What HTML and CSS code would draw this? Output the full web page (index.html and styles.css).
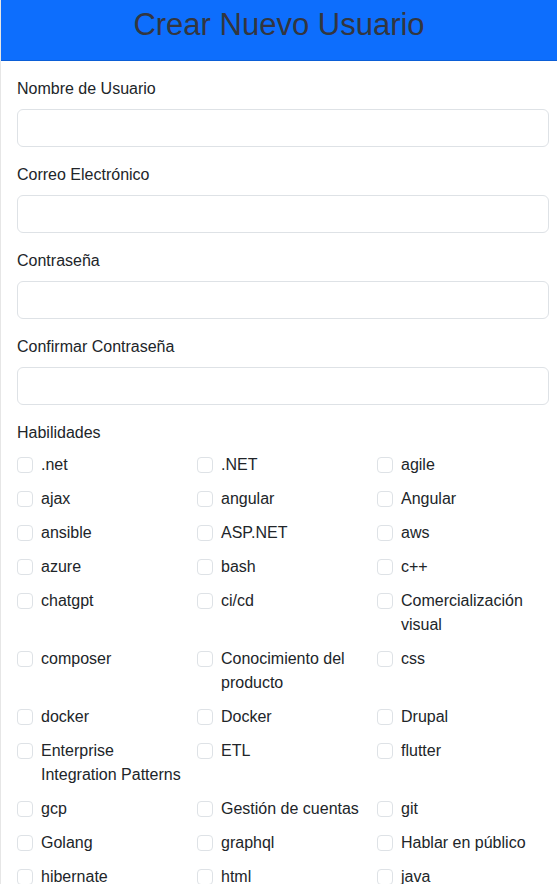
FILE: index.html
```html
<!DOCTYPE html>
<html lang="es">
<head>
<meta charset="utf-8">
<title>Crear Nuevo Usuario</title>
<link rel="stylesheet" href="styles.css">
</head>
<body>
<div class="card">
  <div class="card-header">
    <h1 class="title">Crear Nuevo Usuario</h1>
  </div>
  <form class="card-body">
    <div class="field">
      <label class="form-label" for="username">Nombre de Usuario</label>
      <input class="form-control" id="username" type="text">
    </div>
    <div class="field">
      <label class="form-label" for="email">Correo Electrónico</label>
      <input class="form-control" id="email" type="email">
    </div>
    <div class="field">
      <label class="form-label" for="password">Contraseña</label>
      <input class="form-control" id="password" type="password">
    </div>
    <div class="field">
      <label class="form-label" for="password2">Confirmar Contraseña</label>
      <input class="form-control" id="password2" type="password">
    </div>
    <div class="field">
      <div class="form-label">Habilidades</div>
      <div class="skills">
        <label class="check"><input type="checkbox"><span>.net</span></label>
        <label class="check"><input type="checkbox"><span>.NET</span></label>
        <label class="check"><input type="checkbox"><span>agile</span></label>
        <label class="check"><input type="checkbox"><span>ajax</span></label>
        <label class="check"><input type="checkbox"><span>angular</span></label>
        <label class="check"><input type="checkbox"><span>Angular</span></label>
        <label class="check"><input type="checkbox"><span>ansible</span></label>
        <label class="check"><input type="checkbox"><span>ASP.NET</span></label>
        <label class="check"><input type="checkbox"><span>aws</span></label>
        <label class="check"><input type="checkbox"><span>azure</span></label>
        <label class="check"><input type="checkbox"><span>bash</span></label>
        <label class="check"><input type="checkbox"><span>c++</span></label>
        <label class="check"><input type="checkbox"><span>chatgpt</span></label>
        <label class="check"><input type="checkbox"><span>ci/cd</span></label>
        <label class="check"><input type="checkbox"><span>Comercialización visual</span></label>
        <label class="check"><input type="checkbox"><span>composer</span></label>
        <label class="check"><input type="checkbox"><span>Conocimiento del producto</span></label>
        <label class="check"><input type="checkbox"><span>css</span></label>
        <label class="check"><input type="checkbox"><span>docker</span></label>
        <label class="check"><input type="checkbox"><span>Docker</span></label>
        <label class="check"><input type="checkbox"><span>Drupal</span></label>
        <label class="check"><input type="checkbox"><span>Enterprise Integration Patterns</span></label>
        <label class="check"><input type="checkbox"><span>ETL</span></label>
        <label class="check"><input type="checkbox"><span>flutter</span></label>
        <label class="check"><input type="checkbox"><span>gcp</span></label>
        <label class="check"><input type="checkbox"><span>Gestión de cuentas</span></label>
        <label class="check"><input type="checkbox"><span>git</span></label>
        <label class="check"><input type="checkbox"><span>Golang</span></label>
        <label class="check"><input type="checkbox"><span>graphql</span></label>
        <label class="check"><input type="checkbox"><span>Hablar en público</span></label>
        <label class="check"><input type="checkbox"><span>hibernate</span></label>
        <label class="check"><input type="checkbox"><span>html</span></label>
        <label class="check"><input type="checkbox"><span>java</span></label>
      </div>
    </div>
  </form>
</div>
</body>
</html>
```

FILE: styles.css
```css
* {
  box-sizing: border-box;
}

html, body {
  margin: 0;
  padding: 0;
  background: #ffffff;
}

body {
  font-family: "Liberation Sans", Arial, sans-serif;
  font-size: 16px;
  line-height: 24px;
  color: #212529;
  overflow-x: hidden;
}

.card {
  width: 100%;
  border-left: 1px solid #e6e6e6;
  min-height: 884px;
}

.card-header {
  background: #0d6efd;
  border-bottom: 1px solid #0b5ed7;
  padding: 6px 0 16px;
  text-align: center;
}

.title {
  margin: 0;
  font-size: 31px;
  line-height: 38px;
  font-weight: 400;
  color: #333640;
}

.card-body {
  padding: 16px 8px 16px 16px;
}

.field {
  margin-bottom: 16px;
}

.form-label {
  display: block;
  margin-bottom: 8px;
}

.form-control {
  display: block;
  width: 100%;
  height: 38px;
  padding: 6px 12px;
  font: inherit;
  color: #212529;
  background: #fff;
  border: 1px solid #dee2e6;
  border-radius: 6px;
  outline: none;
}

.skills {
  display: grid;
  grid-template-columns: repeat(3, 1fr);
  column-gap: 8px;
  row-gap: 10px;
}

.check {
  display: flex;
  align-items: flex-start;
  gap: 8px;
}

.check input {
  appearance: none;
  -webkit-appearance: none;
  flex-shrink: 0;
  width: 16px;
  height: 16px;
  margin: 4px 0 0;
  border: 1px solid #dee2e6;
  border-radius: 4px;
  background: #fff;
}
```
